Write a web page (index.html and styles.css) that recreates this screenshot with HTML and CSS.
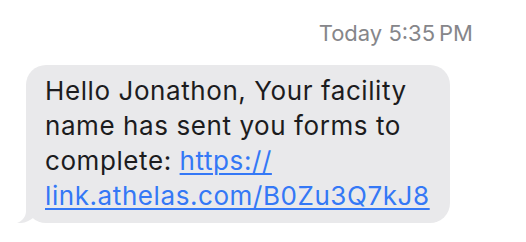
FILE: index.html
```html
<!DOCTYPE html>
<html lang="en">
<head>
  <meta charset="UTF-8" />
  <title>Messages</title>
  <link rel="stylesheet" href="styles.css">
</head>
<body>
  <div class="thread">
    <div class="stamp"><span class="day">Today</span> 5:35&#8201;PM</div>
    <div class="bubble">
      Hello Jonathon, Your facility<br>
      name has sent you forms to<br>
      complete: <a href="#">https://<br>link.athelas.com/B0Zu3Q7kJ8</a>
      <svg class="tail" width="24" height="26" viewBox="0 0 24 26">
        <path d="M10 0 L10 14 C10 20 6 24 1 26 C7 26.6 13 24.5 17 21 L17 0 Z" fill="#e9e9eb" />
      </svg>
    </div>
  </div>
</body>
</html>
```

FILE: styles.css
```css
body {
  margin: 0;
  background: #fff;
  font-family: Inter, "Liberation Sans", sans-serif;
  -webkit-font-smoothing: antialiased;
}
.thread {
  display: flex;
  flex-direction: column;
  padding: 22px 0 0 26px;
}
.stamp {
  align-self: flex-end;
  margin-right: 53px;
  font-size: 22px;
  line-height: 22px;
  color: #86868a;
}
.bubble {
  position: relative;
  width: 424px;
  box-sizing: border-box;
  margin-top: 21px;
  padding: 8px 10px 10px 19px;
  background: #e9e9eb;
  border-radius: 20px;
  font-size: 26px;
  line-height: 35px;
  letter-spacing: 0.58px;
  color: #1c1c1e;
}
.bubble a {
  color: #3478f6;
  text-decoration: underline;
  text-underline-offset: 3px;
  text-decoration-thickness: 1.5px;
}
.tail {
  position: absolute;
  left: -10px;
  bottom: 0;
}
```
